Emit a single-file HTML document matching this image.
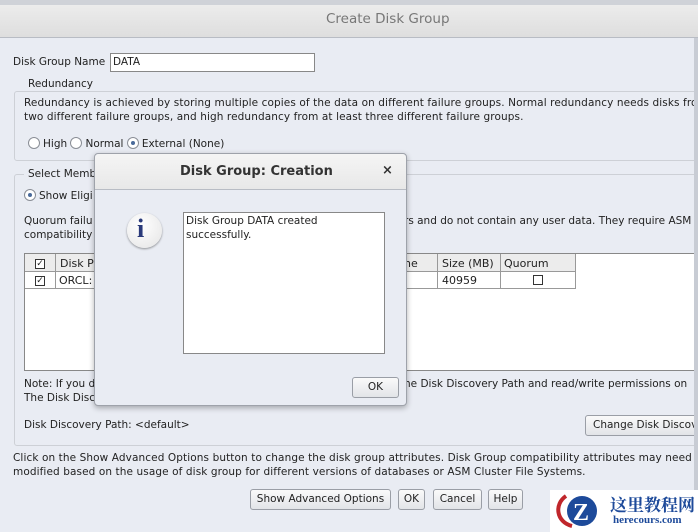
<!DOCTYPE html>
<html><head><style>
*{margin:0;padding:0;box-sizing:border-box}
body{width:698px;height:532px;overflow:hidden;background:#e9ecf3;font-family:"DejaVu Sans","Liberation Sans",sans-serif;font-size:10.5px;color:#222;position:relative}
.a{position:absolute;white-space:nowrap}
.btn{position:absolute;border:1px solid #9a9ea6;border-radius:3px;background:linear-gradient(#fafafa,#e2e4e8);text-align:center;line-height:19px;height:21px}
.rad{display:inline-block;width:12px;height:12px;border:1px solid #8a8e96;border-radius:50%;background:#fff;vertical-align:-2px;position:relative;margin-right:3px}
.rad.on::after{content:"";position:absolute;left:3px;top:3px;width:4px;height:4px;border-radius:50%;background:#4a6a9a}
.cb{display:inline-block;width:10px;height:10px;border:1px solid #333;background:#fff;font-size:9px;line-height:8px;text-align:center}
</style></head><body>
<div class="a" style="left:0;top:0;width:698px;height:5px;background:#cfd2d8"></div>
<div class="a" style="left:0;top:5px;width:698px;height:33px;background:linear-gradient(#ececec,#dedede);border-bottom:1px solid #b8bcc4"></div>
<div class="a" style="left:326px;top:11px;font-size:13.5px;color:#777">Create Disk Group</div>
<div class="a" style="left:13px;top:56px">Disk Group Name</div>
<div class="a" style="left:110px;top:53px;width:205px;height:19px;background:#fff;border:1px solid #888;padding-left:2px;line-height:17px">DATA</div>
<div class="a" style="left:14px;top:91px;width:690px;height:70px;border:1px solid #cdd0d6;border-radius:3px"></div>
<div class="a" style="left:24px;top:78px;background:#e9ecf3;padding:0 4px">Redundancy</div>
<div class="a" style="left:24px;top:97px;letter-spacing:0.1px">Redundancy is achieved by storing multiple copies of the data on different failure groups. Normal redundancy needs disks fro</div>
<div class="a" style="left:24px;top:111px;letter-spacing:0.1px">two different failure groups, and high redundancy from at least three different failure groups.</div>
<div class="a" style="left:28px;top:137px"><span class="rad"></span>High <span class="rad"></span>Normal <span class="rad on"></span>External (None)</div>
<div class="a" style="left:14px;top:174px;width:690px;height:272px;border:1px solid #cdd0d6;border-radius:3px"></div>
<div class="a" style="left:24px;top:168px;background:#e9ecf3;padding:0 4px">Select Memb</div>
<div class="a" style="left:24px;top:189px"><span class="rad on"></span>Show Eligi</div>
<div class="a" style="left:24px;top:215px">Quorum failu</div>
<div class="a" style="left:24px;top:229px">compatibility</div>
<div class="a" style="left:404px;top:215px">rs and do not contain any user data. They require ASM</div>
<div class="a" style="left:24px;top:253px;width:680px;height:118px;background:#fff;border:1px solid #888"></div>
<div class="a" style="left:25px;top:254px;width:551px;height:18px;background:#ececec;border-bottom:1px solid #999"></div>
<div class="a" style="left:55px;top:254px;width:1px;height:35px;background:#999"></div>
<div class="a" style="left:437px;top:254px;width:1px;height:35px;background:#999"></div>
<div class="a" style="left:500px;top:254px;width:1px;height:35px;background:#999"></div>
<div class="a" style="left:575px;top:254px;width:1px;height:35px;background:#999"></div>
<div class="a" style="left:25px;top:288px;width:551px;height:1px;background:#999"></div>
<div class="a" style="left:35px;top:257px"><span class="cb">✓</span></div>
<div class="a" style="left:35px;top:274px"><span class="cb">✓</span></div>
<div class="a" style="left:60px;top:257px;font-size:11px">Disk P</div>
<div class="a" style="left:59px;top:274px;font-size:11px">ORCL:</div>
<div class="a" style="left:404px;top:257px;font-size:11px">ne</div>
<div class="a" style="left:442px;top:257px;font-size:11px">Size (MB)</div>
<div class="a" style="left:504px;top:257px;font-size:11px">Quorum</div>
<div class="a" style="left:442px;top:274px;font-size:11px">40959</div>
<div class="a" style="left:533px;top:275px"><span class="cb"></span></div>
<div class="a" style="left:24px;top:378px">Note: If you d</div>
<div class="a" style="left:24px;top:392px">The Disk Disc</div>
<div class="a" style="left:404px;top:378px">ne Disk Discovery Path and read/write permissions on</div>
<div class="a" style="left:24px;top:419px">Disk Discovery Path: &lt;default&gt;</div>
<div class="btn" style="left:585px;top:415px;width:120px;text-align:left;padding-left:7px">Change Disk Discov</div>
<div class="a" style="left:13px;top:452px;letter-spacing:0.1px">Click on the Show Advanced Options button to change the disk group attributes. Disk Group compatibility attributes may need t</div>
<div class="a" style="left:13px;top:466px;letter-spacing:0.1px">modified based on the usage of disk group for different versions of databases or ASM Cluster File Systems.</div>
<div class="btn" style="left:250px;top:489px;width:141px">Show Advanced Options</div>
<div class="btn" style="left:398px;top:489px;width:27px">OK</div>
<div class="btn" style="left:433px;top:489px;width:49px">Cancel</div>
<div class="btn" style="left:488px;top:489px;width:35px">Help</div>
<div class="a" style="left:694px;top:38px;width:4px;height:494px;background:#c8ccd4"></div>
<div class="a" style="left:550px;top:490px;width:148px;height:42px;background:#fff"></div>
<svg class="a" style="left:552px;top:490px" width="60" height="42"><path d="M14 6 C2 14 4 32 20 36" stroke="#c0262b" stroke-width="4" fill="none"/><circle cx="30" cy="21" r="15" fill="#1d4a9a"/><text x="21" y="30" font-family="Liberation Serif" font-weight="bold" font-size="24" fill="#fff">Z</text></svg>
<div class="a" style="left:610px;top:491px;font-family:'Noto Serif CJK SC',serif;font-weight:bold;font-size:17px;color:#1d4a9a">这里教程网</div>
<div class="a" style="left:613px;top:514px;font-family:'Liberation Serif',serif;font-weight:bold;font-size:11px;color:#1d4a9a">herecours.com</div>
<div class="a" style="left:94px;top:153px;width:313px;height:253px;background:#e9ecf3;border:1px solid #9ea2aa;border-radius:4px;box-shadow:0 2px 6px rgba(0,0,0,.3)"></div>
<div class="a" style="left:95px;top:154px;width:311px;height:36px;background:linear-gradient(#f5f5f5,#e8e8e8);border-bottom:1px solid #b8bcc4;border-radius:4px 4px 0 0"></div>
<div class="a" style="left:180px;top:164px;font-size:13px;font-weight:bold;color:#333">Disk Group: Creation</div>
<div class="a" style="left:382px;top:163px;font-size:13px;font-weight:bold;color:#333">×</div>
<div class="a" style="left:127px;top:213px;width:35px;height:35px;border-radius:50%;background:radial-gradient(circle at 40% 35%,#fff,#e4e4e4);box-shadow:0 1px 2px rgba(0,0,0,.4)"></div>
<div class="a" style="left:137px;top:214px;font-family:'Liberation Serif',serif;font-weight:bold;font-size:26px;color:#2a3a7a">i</div>
<div class="a" style="left:183px;top:212px;width:202px;height:142px;background:#fff;border:1px solid #888;padding:1px 2px;line-height:14px;white-space:normal">Disk Group DATA created<br>successfully.</div>
<div class="btn" style="left:352px;top:377px;width:47px">OK</div>
</body></html>
